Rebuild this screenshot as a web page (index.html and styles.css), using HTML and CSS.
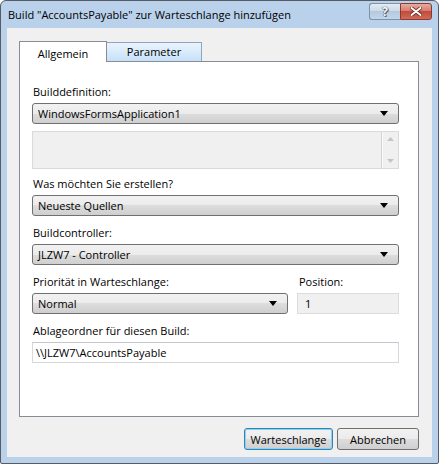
FILE: index.html
```html
<!DOCTYPE html>
<html lang="de">
<head>
<meta charset="utf-8">
<title>Build zur Warteschlange hinzufügen</title>
<link rel="stylesheet" href="styles.css">
</head>
<body>
<div class="window">
  <div class="titlebar">
    <span class="title">Build "AccountsPayable" zur Warteschlange hinzufügen</span>
    <div class="caption-btns">
      <div class="cbtn help">?</div>
      <div class="cbtn close">
        <svg width="12" height="9" viewBox="0 0 12 9">
          <path d="M1.5 1 L10.5 8 M10.5 1 L1.5 8" stroke="#6b2a22" stroke-width="3.6" stroke-linecap="round"/>
          <path d="M1.5 1 L10.5 8 M10.5 1 L1.5 8" stroke="#ffffff" stroke-width="2" stroke-linecap="round"/>
        </svg>
      </div>
    </div>
  </div>
  <div class="client">
    <div class="tabs">
      <div class="tab active">Allgemein</div>
      <div class="tab inactive">Parameter</div>
    </div>
    <div class="panel">
      <div class="label">Builddefinition:</div>
      <div class="combo"><span>WindowsFormsApplication1</span><svg class="arrow" width="8" height="5" viewBox="0 0 8 5"><path d="M0 0 H8 L4 5 Z" fill="#000"/></svg></div>
      <div class="memo">
        <div class="memo-body"></div>
        <div class="memo-scroll">
          <svg width="7" height="4" viewBox="0 0 7 4"><path d="M0 4 H7 L3.5 0 Z" fill="#c4c4c4"/></svg>
          <svg width="7" height="4" viewBox="0 0 7 4"><path d="M0 0 H7 L3.5 4 Z" fill="#c4c4c4"/></svg>
        </div>
      </div>

      <div class="label gap-after-memo">Was möchten Sie erstellen?</div>
      <div class="combo"><span>Neueste Quellen</span><svg class="arrow" width="8" height="5" viewBox="0 0 8 5"><path d="M0 0 H8 L4 5 Z" fill="#000"/></svg></div>

      <div class="label gap">Buildcontroller:</div>
      <div class="combo"><span>JLZW7 - Controller</span><svg class="arrow" width="8" height="5" viewBox="0 0 8 5"><path d="M0 0 H8 L4 5 Z" fill="#000"/></svg></div>

      <div class="row gap">
        <div class="col-main">
          <div class="label">Priorität in Warteschlange:</div>
          <div class="combo"><span>Normal</span><svg class="arrow" width="8" height="5" viewBox="0 0 8 5"><path d="M0 0 H8 L4 5 Z" fill="#000"/></svg></div>
        </div>
        <div class="col-pos">
          <div class="label">Position:</div>
          <div class="readonly">1</div>
        </div>
      </div>

      <div class="label gap">Ablageordner für diesen Build:</div>
      <div class="textbox">\\JLZW7\AccountsPayable</div>
    </div>
    <div class="buttons">
      <div class="btn default w-queue">Warteschlange</div>
      <div class="btn w-cancel">Abbrechen</div>
    </div>
  </div>
</div>
</body>
</html>
```

FILE: styles.css
```css
html, body {
  margin: 0;
  padding: 0;
  background: #ffffff;
}

body {
  font-family: "Open Sans", "Noto Sans", sans-serif;
  font-size: 11px;
  color: #000;
}

.window {
  width: 439px;
  height: 464px;
  box-sizing: border-box;
  border: 1px solid #575c63;
  border-radius: 6px 6px 2px 2px;
  background: #b9d1ea;
  padding: 0 6px 6px 6px;
  display: flex;
  flex-direction: column;
}

.titlebar {
  height: 27px;
  display: flex;
  align-items: flex-start;
  flex: none;
}

.title {
  padding-left: 1px;
  line-height: 27px;
  font-size: 11px;
  color: #000;
  white-space: nowrap;
}

.caption-btns {
  margin-left: auto;
  margin-top: 2px;
  display: flex;
}

.cbtn {
  height: 17px;
  box-sizing: border-box;
  display: flex;
  align-items: center;
  justify-content: center;
}

.help {
  width: 31px;
  border: 1px solid #7d91aa;
  border-right: none;
  border-radius: 3px 0 0 3px;
  background: linear-gradient(#e4ecf5 0%, #cbd8e6 50%, #b6c8dc 50%, #c3d5e8 100%);
  color: #f7f9fb;
  font-weight: bold;
  font-size: 12px;
  line-height: 15px;
  text-shadow: 0 0 1px #3c4c60, 0 0 1px #3c4c60, 1px 1px 0 #5b6b80;
}

.close {
  width: 32px;
  border: 1px solid #8a3a31;
  border-radius: 0 3px 3px 0;
  background: linear-gradient(#e6ac9f 0%, #d5786a 50%, #c44a39 50%, #d06b58 100%);
}

.client {
  flex: 1;
  background: #f0f0f0;
  padding: 13px 13px 0 12px;
  display: flex;
  flex-direction: column;
}

.tabs {
  height: 20px;
  display: flex;
  align-items: flex-end;
  flex: none;
}

.tab {
  box-sizing: border-box;
  border: 1px solid #898c95;
  border-bottom: none;
  display: flex;
  justify-content: center;
  align-items: center;
}

.tab.active {
  width: 88px;
  height: 21px;
  margin-bottom: -1px;
  background: #ffffff;
  position: relative;
  z-index: 1;
  padding-top: 2px;
}

.tab.inactive {
  width: 96px;
  height: 19px;
  margin-left: -1px;
  border-color: #8fa6c0;
  background: linear-gradient(#eaf3fc 0%, #d9ebfb 50%, #c5e0f9 100%);
  padding-bottom: 1px;
}

.panel {
  width: 400px;
  height: 356px;
  box-sizing: border-box;
  border: 1px solid #898c95;
  background: #ffffff;
  padding: 23px 19px 0 12px;
  flex: none;
}

.label {
  line-height: 14px;
  height: 14px;
  margin-bottom: 4px;
  padding-left: 1px;
  white-space: nowrap;
}

.label.gap,
.row.gap {
  margin-top: 10px;
}

.label.gap-after-memo {
  margin-top: 8px;
}

.row.gap .label {
  margin-top: 0;
}

.combo {
  height: 21px;
  box-sizing: border-box;
  border: 1px solid #707070;
  border-radius: 3px;
  background: linear-gradient(#f2f2f2 0%, #ebebeb 50%, #dddddd 50%, #cfcfcf 100%);
  display: flex;
  align-items: center;
  justify-content: space-between;
  padding: 0 10px 0 5px;
  white-space: nowrap;
}

.combo .arrow {
  flex: none;
}

.memo {
  margin-top: 7px;
  height: 38px;
  box-sizing: border-box;
  border: 1px solid #dadada;
  background: #f0f0f0;
  display: flex;
}

.memo-body {
  flex: 1;
}

.memo-scroll {
  width: 16px;
  border-left: 1px solid #d2d2d2;
  box-shadow: inset 1px 0 0 #fafafa;
  display: flex;
  flex-direction: column;
  align-items: center;
  justify-content: space-between;
  padding: 5px 0 5px 0;
}

.row {
  display: flex;
  gap: 9px;
}

.col-main {
  width: 256px;
}

.col-pos {
  width: 102px;
}

.col-pos .label {
  padding-left: 2px;
}

.readonly {
  height: 21px;
  box-sizing: border-box;
  border: 1px solid #dcdcdc;
  background: #f0f0f0;
  line-height: 19px;
  padding-left: 7px;
}

.textbox {
  height: 21px;
  box-sizing: border-box;
  border: 1px solid #d4d8dd;
  border-top-color: #c4c8ce;
  background: #ffffff;
  line-height: 19px;
  padding-left: 3px;
  white-space: nowrap;
}

.buttons {
  margin-top: 11px;
  width: 400px;
  display: flex;
  justify-content: flex-end;
  gap: 4px;
}

.btn {
  height: 22px;
  box-sizing: border-box;
  border: 1px solid #707070;
  border-radius: 3px;
  background: linear-gradient(#f2f2f2 0%, #ebebeb 50%, #dddddd 50%, #cfcfcf 100%);
  display: flex;
  align-items: center;
  justify-content: center;
}

.btn.default {
  border-color: #3c7fb1;
  box-shadow: inset 0 0 0 1px #7fd6f5;
}

.w-queue {
  width: 89px;
}

.w-cancel {
  width: 82px;
}
```
